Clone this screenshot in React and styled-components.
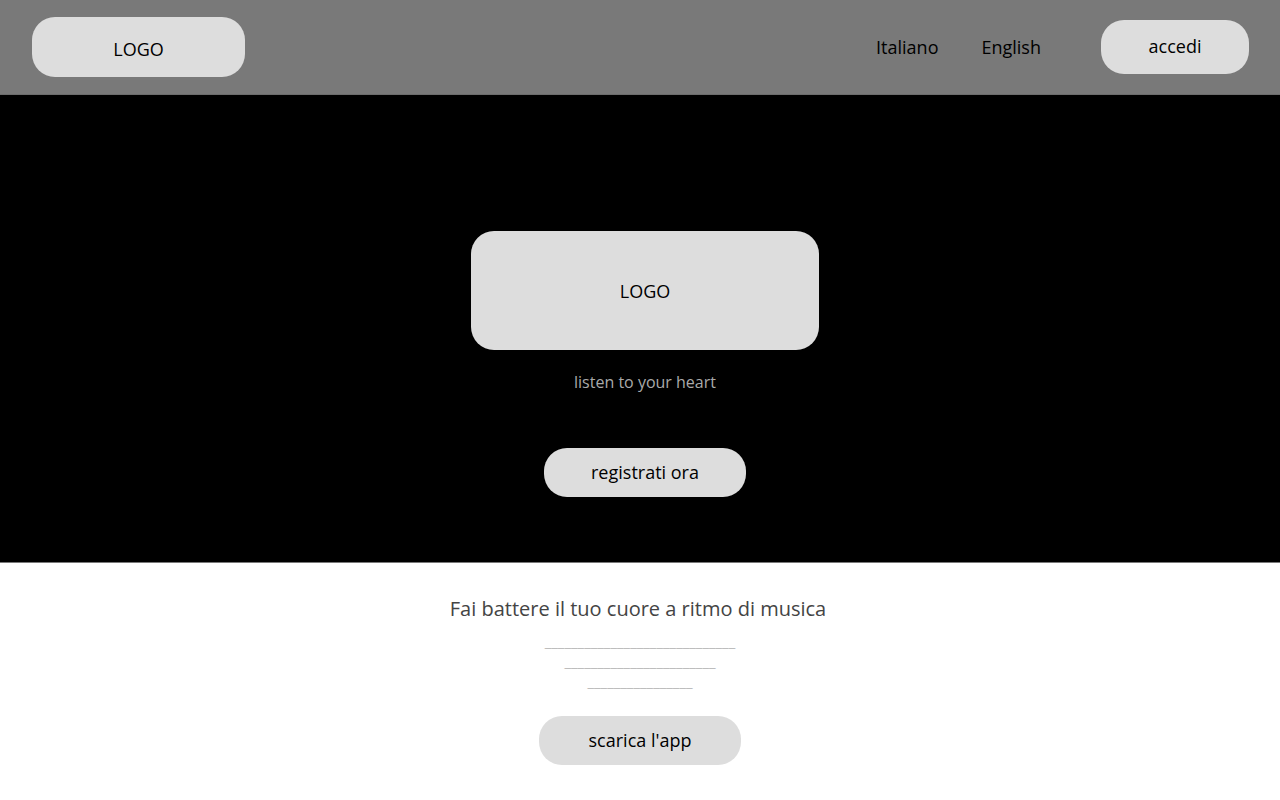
import React from "react";
import styled, { createGlobalStyle } from "styled-components";

const GlobalStyle = createGlobalStyle`
  * { box-sizing: border-box; }
  body {
    margin: 0;
    background: #ffffff;
    color: #000000;
    font-family: "Open Sans", sans-serif;
    font-size: 18px;
    line-height: 24px;
  }
`;

const Header = styled.header`
  display: flex;
  align-items: center;
  justify-content: space-between;
  min-height: 95px;
  padding: 0 31px 0 32px;
  border-bottom: 1px solid #6c6c6c;
  background: #797979;
`;

const Logo = styled.div`
  display: flex;
  align-items: center;
  justify-content: center;
  width: ${({ $large }) => ($large ? 348 : 213)}px;
  height: ${({ $large }) => ($large ? 119 : 60)}px;
  padding-top: ${({ $large }) => ($large ? 0 : 4)}px;
  border-radius: 23px;
  background: #dddddd;
`;

const Nav = styled.nav`
  display: flex;
  align-items: center;
  gap: 43px;
`;

const LanguageLink = styled.a`
  color: #000000;
  text-decoration: none;
`;

const Button = styled.button`
  width: ${({ $compact }) => ($compact ? 148 : 202)}px;
  height: ${({ $compact }) => ($compact ? 54 : 49)}px;
  margin: 0;
  padding: 0 0 2px;
  border: 0;
  border-radius: 23px;
  background: #dddddd;
  color: #000000;
  font: inherit;
  cursor: pointer;
`;

const LoginButton = styled(Button)`
  margin-left: 17px;
`;

const Hero = styled.section`
  display: flex;
  flex-direction: column;
  align-items: center;
  padding: 136px 0 65px 10px;
  border-bottom: 1px solid #797979;
  background: #000000;
`;

const Tagline = styled.p`
  margin: 20px 0 54px;
  color: #aaaaaa;
  font-size: 16px;
`;

const Download = styled.section`
  display: flex;
  flex-direction: column;
  align-items: center;
  padding: 32px 0 35px;
`;

const Title = styled.h1`
  margin: 0 4px 8px 0;
  color: #444444;
  font-size: 20px;
  font-weight: 400;
  line-height: 28px;
`;

const Blurb = styled.p`
  margin: 0 0 25px;
  color: #bbbbbb;
  font-size: 15px;
  line-height: 20px;
  text-align: center;
`;

const Line = styled.span`
  display: block;
`;

const blurbLines = [
  "_____________________________",
  "_______________________",
  "________________",
];

export default function App() {
  return (
    <>
      <GlobalStyle />
      <Header>
        <Logo>LOGO</Logo>
        <Nav>
          <LanguageLink href="#it">Italiano</LanguageLink>
          <LanguageLink href="#en">English</LanguageLink>
          <LoginButton $compact>accedi</LoginButton>
        </Nav>
      </Header>
      <main>
        <Hero>
          <Logo $large>LOGO</Logo>
          <Tagline>listen to your heart</Tagline>
          <Button>registrati ora</Button>
        </Hero>
        <Download>
          <Title>Fai battere il tuo cuore a ritmo di musica</Title>
          <Blurb>
            {blurbLines.map((line) => (
              <Line key={line}>{line}</Line>
            ))}
          </Blurb>
          <Button>scarica l'app</Button>
        </Download>
      </main>
    </>
  );
}
